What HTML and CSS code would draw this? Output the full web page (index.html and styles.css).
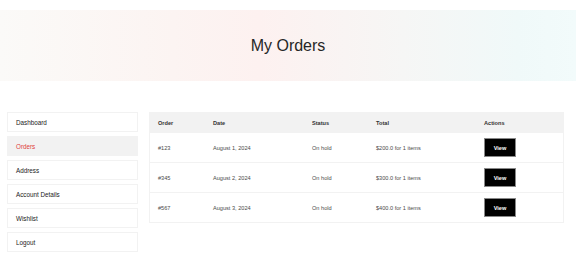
FILE: index.html
```html
<!DOCTYPE html>
<html lang="en">
  <head>
    <meta charset="utf-8">
    <title>My Orders</title>
    <link rel="stylesheet" href="styles.css">
  </head>
  <body>
    <header class="banner">
      <h1>My Orders</h1>
    </header>
    <main class="account">
      <nav class="menu">
        <a class="menu-item" href="#">Dashboard</a>
        <a class="menu-item active" href="#">Orders</a>
        <a class="menu-item" href="#">Address</a>
        <a class="menu-item" href="#">Account Details</a>
        <a class="menu-item" href="#">Wishlist</a>
        <a class="menu-item" href="#">Logout</a>
      </nav>
      <table class="orders">
        <thead>
          <tr>
            <th class="col-order">Order</th>
            <th class="col-date">Date</th>
            <th class="col-status">Status</th>
            <th class="col-total">Total</th>
            <th>Actions</th>
          </tr>
        </thead>
        <tbody>
          <tr>
            <td>#123</td>
            <td>August 1, 2024</td>
            <td>On hold</td>
            <td>$200.0 for 1 items</td>
            <td><button class="view">View</button></td>
          </tr>
          <tr>
            <td>#345</td>
            <td>August 2, 2024</td>
            <td>On hold</td>
            <td>$300.0 for 1 items</td>
            <td><button class="view">View</button></td>
          </tr>
          <tr>
            <td>#567</td>
            <td>August 3, 2024</td>
            <td>On hold</td>
            <td>$400.0 for 1 items</td>
            <td><button class="view">View</button></td>
          </tr>
        </tbody>
      </table>
    </main>
  </body>
</html>
```

FILE: styles.css
```css
body {
  margin: 0;
  font-family: "Liberation Sans", Arial, sans-serif;
  color: #222;
  background: #fff;
}

.banner {
  margin-top: 10px;
  height: 71px;
  display: flex;
  align-items: center;
  justify-content: center;
  background: linear-gradient(90deg, #fbfaf8 0%, #fcf4f2 30%, #fdf1f0 45%, #f6f6f5 70%, #f0f9f9 90%, #f2fbfb 100%);
}

.banner h1 {
  margin: 0;
  font-size: 16px;
  font-weight: normal;
  color: #262626;
}

.account {
  display: flex;
  align-items: flex-start;
  gap: 11px;
  padding: 31px 12px 0 7px;
}

.menu {
  width: 131px;
  flex: none;
  display: flex;
  flex-direction: column;
  gap: 4px;
}

.menu-item {
  height: 20px;
  box-sizing: border-box;
  display: flex;
  align-items: center;
  padding-left: 8px;
  border: 1px solid #f2f2f2;
  font-size: 6.3px;
  color: #222;
  text-decoration: none;
}

.menu-item.active {
  background: #f2f2f2;
  color: #e0413d;
}

.orders {
  flex: 1;
  border-collapse: collapse;
  border: 1px solid #f2f2f2;
  font-size: 5.6px;
}

.orders th {
  height: 19px;
  padding: 0 0 0 8px;
  background: #f2f2f2;
  text-align: left;
  font-weight: bold;
  color: #333;
}

.orders td {
  height: 29px;
  padding: 0 0 0 8px;
  border-top: 1px solid #f2f2f2;
  color: #4a4a4a;
}

.col-order {
  width: 47px;
}

.col-date {
  width: 91px;
}

.col-status {
  width: 56px;
}

.col-total {
  width: 100px;
}

.view {
  width: 32px;
  height: 19px;
  padding: 0;
  border: 1px solid #888;
  background: #000;
  color: #fff;
  font-family: inherit;
  font-size: 5.6px;
  font-weight: bold;
}
```
